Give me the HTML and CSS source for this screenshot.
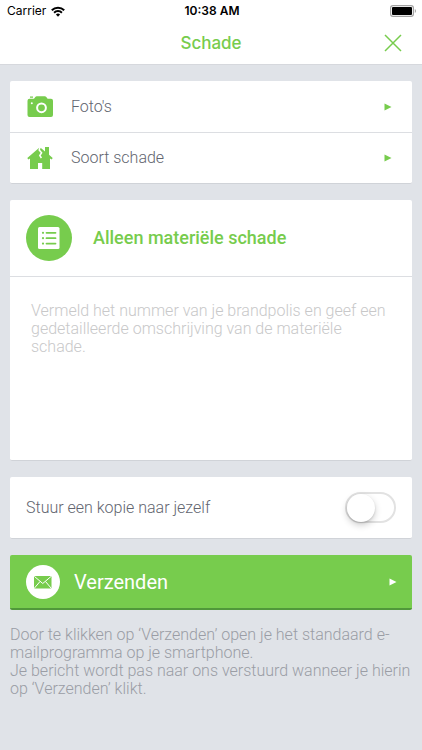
FILE: index.html
```html
<!DOCTYPE html>
<html lang="nl">
<head>
<meta charset="utf-8">
<meta name="viewport" content="width=device-width, initial-scale=1">
<title>Schade</title>
<link rel="stylesheet" href="styles.css">
</head>
<body>
<header class="top">
  <div class="status">
    <div class="carrier">
      <span>Carrier</span>
      <svg width="14" height="11" viewBox="0 0 14 11" aria-hidden="true"><g fill="none" stroke="#000" stroke-width="2"><path d="M.8 4.2a8.8 8.8 0 0 1 12.4 0"/><path d="M3.1 6.7a5.5 5.5 0 0 1 7.8 0"/></g><path d="M4.9 8.5a3 3 0 0 1 4.2 0L7 10.7z"/></svg>
    </div>
    <span class="clock">10:38 AM</span>
    <svg class="battery" width="27" height="12" viewBox="0 0 27 12" aria-hidden="true"><rect x=".6" y=".6" width="22.8" height="10.8" rx="2.4" fill="#fff" stroke="#a3a3a3" stroke-width="1.2"/><rect x="2" y="2" width="20" height="8" rx="1"/><path d="M24.8 4v4c1.6-.5 1.6-3.5 0-4z" fill="#a3a3a3"/></svg>
  </div>
  <div class="navbar">
    <h1 class="title">Schade</h1>
    <button class="close" type="button" aria-label="Sluiten"><svg width="18" height="18" viewBox="0 0 18 18"><path d="M1 1l16 16M17 1L1 17" stroke="#77cc4d" stroke-width="1.5"/></svg></button>
  </div>
</header>
<main class="content">
  <nav class="card">
    <a class="row" href="#fotos">
      <svg class="row-icon" width="28" height="24" viewBox="0 0 28 24" aria-hidden="true"><path fill="#77cc4d" d="M4 1.6h3v1.2H4zM3.500 3.800H8L9.300 2q.6-.8 1.500-.8h8q.9 0 1.500.8l1.300 1.800h3.400q2 0 2 2V20q0 2-2 2H3.500q-2 0-2-2V5.800q0-2 2-2z"/><circle cx="15.500" cy="12.800" r="4.400" fill="none" stroke="#fff" stroke-width="2"/><circle cx="5.800" cy="8.300" r="1" fill="#fff"/></svg>
      <span class="row-label">Foto's</span>
      <svg class="arrow" width="8" height="8" viewBox="0 0 8 8" aria-hidden="true"><path d="M.5.5L7.500 4L.5 7.500z"/></svg>
    </a>
    <a class="row" href="#soort">
      <svg class="row-icon" width="28" height="24" viewBox="0 0 28 24" aria-hidden="true"><path fill="#77cc4d" d="M13.500 1.500L1.300 12l1 1.600L4 12.500V23h8v-6h4.200v6H24V12.500l1.700 1.100 1-1.600-3.700-3.300V1h-4v4.500l-3.500-3z"/><path d="M14.300 0L13.200 4l2.400 2.700-1.800 2.800 1.600 2.500" fill="none" stroke="#fff" stroke-width="1.500"/></svg>
      <span class="row-label">Soort schade</span>
      <svg class="arrow" width="8" height="8" viewBox="0 0 8 8" aria-hidden="true"><path d="M.5.5L7.500 4L.5 7.500z"/></svg>
    </a>
  </nav>
  <section class="card">
    <div class="card-head">
      <svg width="46" height="46" viewBox="0 0 46 46" aria-hidden="true"><circle cx="23" cy="23" r="23" fill="#77cc4d"/><rect x="12" y="12" width="21.500" height="22" rx="1.500" fill="#fff"/><path d="M20.500 17.800h9M20.500 23.200h9M20.500 28.600h9" stroke="#77cc4d" stroke-width="1.800" stroke-linecap="round"/><g fill="#77cc4d"><circle cx="17" cy="17.800" r="1.100"/><circle cx="17" cy="23.200" r="1.100"/><circle cx="17" cy="28.600" r="1.100"/></g></svg>
      <h2 class="subject"><label for="bericht">Alleen materiële schade</label></h2>
    </div>
    <textarea class="message" id="bericht" placeholder="Vermeld het nummer van je brandpolis en geef een gedetailleerde omschrijving van de materiële schade."></textarea>
  </section>
  <section class="card copy">
    <label for="kopie">Stuur een kopie naar jezelf</label>
    <input class="switch" type="checkbox" role="switch" id="kopie">
  </section>
  <button class="send" type="button">
    <svg width="34" height="34" viewBox="0 0 34 34" aria-hidden="true"><circle cx="17" cy="17" r="17" fill="#fff"/><rect x="8" y="11" width="17.500" height="12.500" rx="1.200" fill="#77cc4d"/><path d="M8.500 11.500l8.250 7 8.250-7M8.500 23l5.500-6.500M25 23l-5.500-6.500" fill="none" stroke="#fff" stroke-width="1"/></svg>
    <span class="send-label">Verzenden</span>
    <svg class="arrow" width="8" height="8" viewBox="0 0 8 8" aria-hidden="true"><path d="M.5.5L7.500 4L.5 7.500z"/></svg>
  </button>
  <p class="note">Door te klikken op ‘Verzenden’ open je het standaard e-mailprogramma op je smartphone.<br>Je bericht wordt pas naar ons verstuurd wanneer je hierin op ‘Verzenden’ klikt.</p>
</main>
</body>
</html>
```
FILE: styles.css
```css
* { box-sizing: border-box; }
body {
  margin: 0;
  min-height: 100vh;
  background: #e0e3e8;
  color: #62656f;
  font: 300 16px/18px Roboto, "Liberation Sans", sans-serif;
}
h1, h2, p { margin: 0; }
button { border: 0; font: inherit; cursor: pointer; }

.top { background: #fff; border-bottom: 1px solid #d6d8dd; }
.status {
  display: grid;
  grid-template-columns: 1fr auto 1fr;
  align-items: center;
  height: 22px;
  padding: 0 5px 0 7px;
  color: #000;
  font: 400 12px/22px Inter, sans-serif;
}
.carrier { display: flex; align-items: center; gap: 5px; }
.clock { font-weight: 600; }
.battery { justify-self: end; }
.navbar {
  display: grid;
  grid-template-columns: 1fr auto 1fr;
  align-items: center;
  height: 42px;
  padding: 0 16px;
}
.title {
  grid-column: 2;
  color: #77cc4d;
  font: 500 17px/22px Inter, sans-serif;
}
.close {
  justify-self: end;
  display: flex;
  padding: 4px;
  background: none;
}

.content {
  display: flex;
  flex-direction: column;
  gap: 16px;
  padding: 16px 10px;
}
.card {
  background: #fff;
  border-radius: 2px;
  border-bottom: 1px solid #d0d3d8;
}
.row {
  display: flex;
  align-items: center;
  height: 51px;
  padding: 0 20px 0 16px;
  color: inherit;
  text-decoration: none;
}
.row + .row { border-top: 1px solid #dcdee2; }
.row-label { flex: 1; margin-left: 17px; }
.arrow { fill: #77cc4d; }

.card-head {
  display: flex;
  align-items: center;
  gap: 21px;
  height: 77px;
  padding: 0 16px;
  border-bottom: 1px solid #dcdee2;
}
.subject {
  color: #77cc4d;
  font: 500 18px/22px Roboto, sans-serif;
}
.message {
  display: block;
  width: 100%;
  height: 183px;
  padding: 25px 21px;
  border: 0;
  background: none;
  resize: none;
  color: #62656f;
  font: inherit;
}
.message::placeholder { color: #c8c8c9; opacity: 1; }

.copy {
  display: flex;
  align-items: center;
  justify-content: space-between;
  height: 62px;
  padding: 0 16px;
}
.switch {
  appearance: none;
  display: flex;
  align-items: center;
  width: 51px;
  height: 31px;
  margin: 0;
  border: 2px solid #e2e2e2;
  border-radius: 16px;
  background: #fff;
}
.switch::before {
  content: "";
  width: 28px;
  height: 28px;
  border-radius: 50%;
  background: #fff;
  box-shadow: 0 3px 7px #0003, 0 1px 2px #0002;
}
.switch:checked { background: #77cc4d; justify-content: flex-end; }

.send {
  display: flex;
  align-items: center;
  height: 55px;
  padding: 0 15px 0 16px;
  border-bottom: 2px solid #50983a;
  border-radius: 2px;
  background: #77cc4d;
  color: #fff;
  text-align: left;
}
.send .arrow { fill: #fff; }
.send-label { flex: 1; margin-left: 14px; font-size: 20px; line-height: 24px; font-weight: 400; }

.note { color: #9a9da5; }
```
